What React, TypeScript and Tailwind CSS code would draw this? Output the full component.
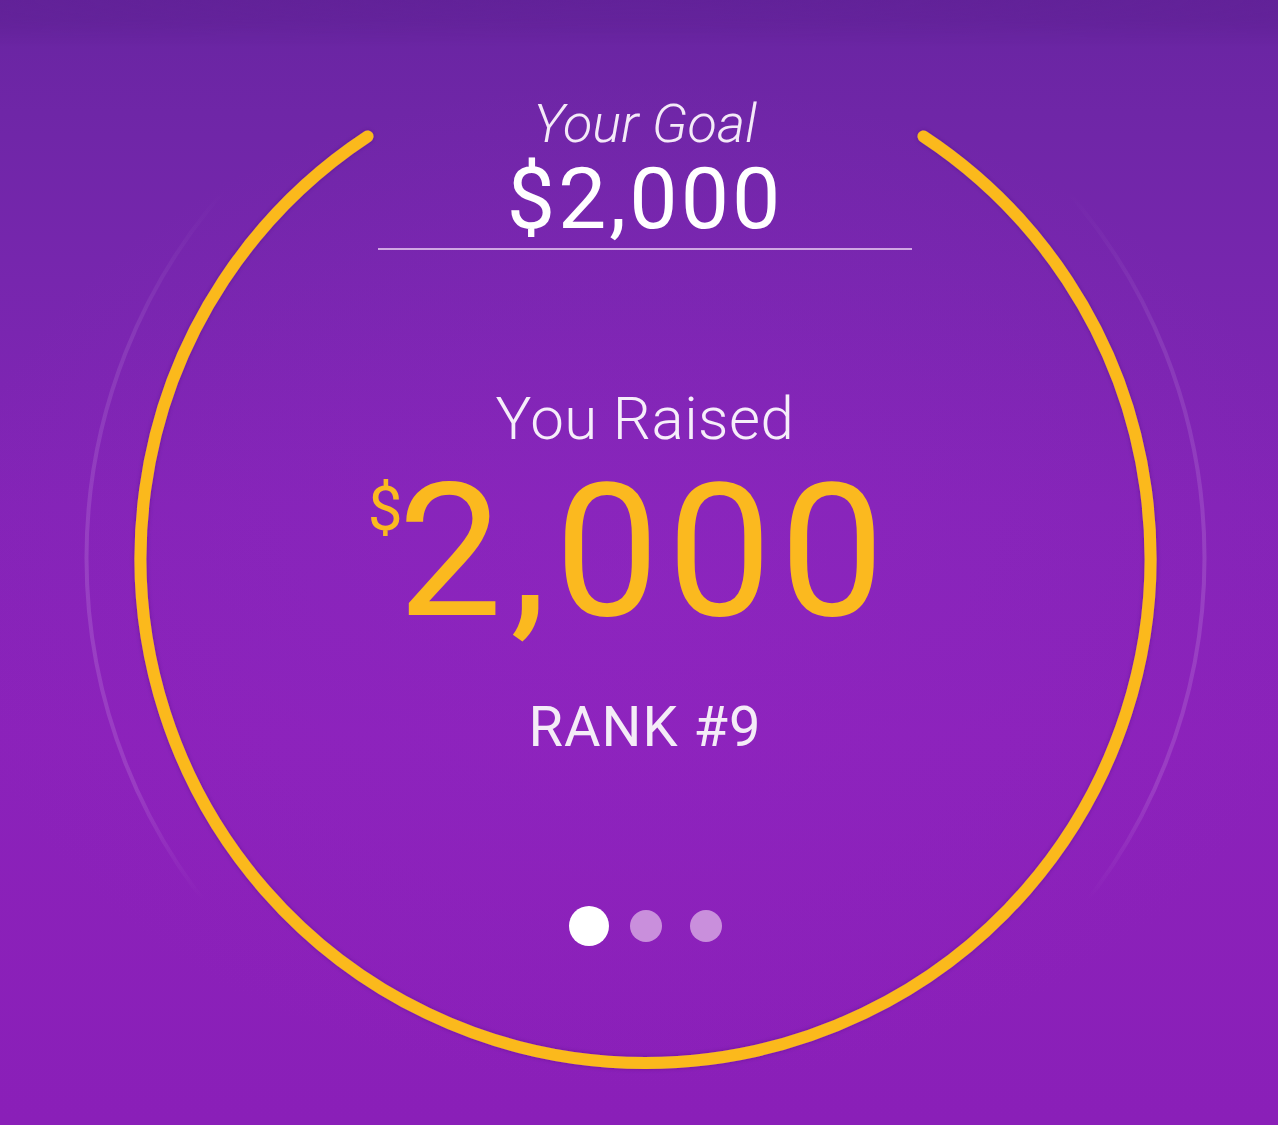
import React from "react";

const CX = 645.5;
const CY = 558;
const R = 505;
const GAP_DEG = 33.4;

function arcPath(cx: number, cy: number, r: number, gapDeg: number) {
  const a = (gapDeg * Math.PI) / 180;
  const x1 = cx - r * Math.sin(a);
  const y1 = cy - r * Math.cos(a);
  const x2 = cx + r * Math.sin(a);
  const y2 = cy - r * Math.cos(a);
  // long way round, counter-clockwise from the left end through the bottom
  return `M ${x1} ${y1} A ${r} ${r} 0 1 0 ${x2} ${y2}`;
}

function Rings() {
  return (
    <svg
      className="absolute inset-0"
      width={1278}
      height={1125}
      viewBox="0 0 1278 1125"
      fill="none"
    >
      <defs>
        <linearGradient id="haloFade" x1="0" y1="0" x2="0" y2="1125" gradientUnits="userSpaceOnUse">
          <stop offset="0.17" stopColor="#ffffff" stopOpacity="0" />
          <stop offset="0.3" stopColor="#ffffff" stopOpacity="0.09" />
          <stop offset="0.5" stopColor="#ffffff" stopOpacity="0.13" />
          <stop offset="0.7" stopColor="#ffffff" stopOpacity="0.12" />
          <stop offset="0.8" stopColor="#ffffff" stopOpacity="0" />
        </linearGradient>
        <filter id="ringShadow" x="-10%" y="-10%" width="120%" height="120%">
          <feDropShadow dx="0" dy="0" stdDeviation="2" floodColor="#4a0f6e" floodOpacity="0.45" />
        </filter>
      </defs>
      <circle cx={CX} cy={CY} r={559} stroke="url(#haloFade)" strokeWidth={4} />
      <path
        d={arcPath(CX, CY, R, GAP_DEG)}
        stroke="#fbb91f"
        strokeWidth={12}
        strokeLinecap="round"
        filter="url(#ringShadow)"
      />
    </svg>
  );
}

export default function App() {
  return (
    <div
      className="relative w-[1278px] h-[1125px] overflow-hidden bg-[linear-gradient(180deg,#62229a_0%,#6a25a3_3%,#6f26a7_10%,#7726ae_25%,#8424b7_45%,#8b22ba_65%,#8a1fb8_100%)]"
      style={{ fontFamily: "Roboto, 'Liberation Sans', Arial, sans-serif" }}
    >
      <div className="absolute inset-0 bg-[radial-gradient(ellipse_55%_45%_at_50%_52%,rgba(150,40,200,0.35)_0%,rgba(150,40,200,0)_100%)]" />
      <div className="absolute inset-x-0 top-0 h-[46px] bg-[radial-gradient(ellipse_70%_100%_at_50%_0%,rgba(98,34,152,0.4)_0%,rgba(98,34,152,0.9)_100%)] [mask-image:linear-gradient(180deg,#000_40%,transparent_100%)]" />
      <Rings />

      <div className="relative flex flex-col items-center pt-[97px] pl-[12px]">
        <div className="text-[54px] leading-none italic font-light text-[#f4eaf8]">Your Goal</div>
        <div className="mt-[5px] text-[86px] leading-none font-normal tracking-[3px] text-white">$2,000</div>
        <div className="mt-[6px] h-[2px] w-[534px] bg-[#e6c8f0]/80" />

        <div className="mt-[139px] text-[60px] leading-none font-light tracking-[0.5px] text-[#f6eefa]">You Raised</div>

        <div className="relative mt-[9px] text-[186px] leading-none font-normal tracking-[8px] text-[#fbb91f]">
          <span className="absolute right-full top-[20px] -mr-[5px] text-[62px] leading-none tracking-normal">$</span>
          2,000
        </div>

        <div className="mt-[55px] text-[56px] leading-none font-normal tracking-[1px] text-[#f4ecf7]">RANK #9</div>

        <div className="mt-[151px] flex items-center">
          <span className="block h-10 w-10 rounded-full bg-white" />
          <span className="ml-[21px] block h-8 w-8 rounded-full bg-[#c98fdc]" />
          <span className="ml-[28px] block h-8 w-8 rounded-full bg-[#c98fdc]" />
        </div>
      </div>
    </div>
  );
}
